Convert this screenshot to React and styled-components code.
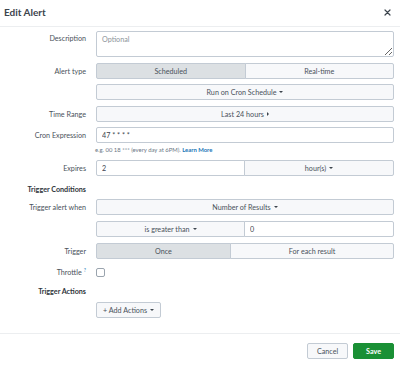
import React from "react"
import styled, { createGlobalStyle } from 'styled-components'

const GlobalStyle = createGlobalStyle`
  html, body {
    margin: 0;
    padding: 0;
    background: #fff;
  }
  body {
    font-family: Lato, "Open Sans", "Liberation Sans", sans-serif;
    color: #3c444d;
  }
`

const Modal = styled.div`
  width: 400px;
  height: 367px;
  display: flex;
  flex-direction: column;
  background: #fff;
`

const Header = styled.div`
  height: 26px;
  display: flex;
  align-items: center;
  justify-content: space-between;
  padding: 0 9px 0 4px;
  border-bottom: 1px solid #eceef0;
  flex-shrink: 0;
`

const Title = styled.h2`
  margin: 0;
  font-size: 10px;
  font-weight: 700;
  color: #3c444d;
  padding-bottom: 2px;
`

const Close = styled.button`
  border: 0;
  background: none;
  padding: 0;
  width: 8px;
  height: 8px;
  display: flex;
  align-items: center;
  justify-content: center;
  cursor: pointer;
  margin-bottom: 2px;
`

const Body = styled.div`
  flex: 1;
  padding: 4px 6px 0 0;
`

const Row = styled.div`
  display: flex;
  align-items: center;
  min-height: 9px;
  margin-bottom: ${p => p.$mb ?? 6}px;
`

const Label = styled.label`
  width: 86px;
  padding-right: 10px;
  flex-shrink: 0;
  text-align: right;
  font-size: 7.2px;
  line-height: 9px;
  color: ${p => (p.$heading ? '#2f353b' : '#4a525b')};
  font-weight: ${p => (p.$heading ? 700 : 400)};
`

const Control = styled.div`
  flex: 1;
  display: flex;
  min-width: 0;
`

const TextArea = styled.textarea`
  width: 100%;
  height: 26px;
  box-sizing: border-box;
  border: 1px solid #c3cbd4;
  border-radius: 2px;
  padding: 3px 5px;
  font-family: inherit;
  font-size: 7.2px;
  color: #3c444d;
  resize: vertical;
  &::placeholder {
    color: #8c939a;
  }
`

const Input = styled.input`
  flex: 1;
  min-width: 0;
  height: 16px;
  box-sizing: border-box;
  border: 1px solid #c3cbd4;
  border-radius: ${p => p.$radius || '2px'};
  padding: 0 5px;
  font-family: inherit;
  font-size: 7.2px;
  color: #3c444d;
  background: #fff;
`

const Segment = styled.button`
  flex: ${p => p.$flex || 1};
  height: 16px;
  box-sizing: border-box;
  border: 1px solid #c3cbd4;
  margin-left: -1px;
  background: ${p => (p.$active ? '#dce0e3' : '#f7f8fa')};
  font-family: inherit;
  font-size: 7.2px;
  color: #4a525b;
  padding: 0;
  display: flex;
  align-items: center;
  justify-content: center;
  &:first-child {
    margin-left: 0;
    border-radius: 2px 0 0 2px;
  }
  &:last-child {
    border-radius: 0 2px 2px 0;
  }
  &:only-child {
    border-radius: 2px;
  }
`

const Caret = styled.span`
  display: inline-block;
  margin-left: 3px;
  width: 0;
  height: 0;
  border-left: 2.2px solid transparent;
  border-right: 2.2px solid transparent;
  border-top: 2.6px solid #3c444d;
`

const RightCaret = styled.span`
  display: inline-block;
  margin-left: 3px;
  width: 0;
  height: 0;
  border-top: 2.2px solid transparent;
  border-bottom: 2.2px solid transparent;
  border-left: 2.6px solid #3c444d;
`

const Help = styled.div`
  margin: -3px 0 7px 95px;
  font-size: 5.9px;
  color: #6b7785;
  a {
    color: #1a76b7;
    font-weight: 700;
    text-decoration: none;
  }
`

const Checkbox = styled.span`
  width: 9px;
  height: 9px;
  box-sizing: border-box;
  border: 1px solid #9aa4ae;
  border-radius: 2px;
  background: #fff;
`

const Sup = styled.sup`
  color: #1a76b7;
  font-size: 5px;
  line-height: 0;
  margin-left: 2px;
`

const SmallButton = styled.button`
  height: 16px;
  width: 65px;
  box-sizing: border-box;
  border: 1px solid #c3cbd4;
  border-radius: 2px;
  background: #f7f8fa;
  font-family: inherit;
  font-size: 7.2px;
  color: #4a525b;
  padding: 0;
  display: flex;
  align-items: center;
  justify-content: center;
`

const Footer = styled.div`
  height: 34px;
  border-top: 1px solid #eceef0;
  display: flex;
  justify-content: flex-end;
  align-items: flex-start;
  gap: 5px;
  padding: 9px 6px 0 0;
  box-sizing: border-box;
  flex-shrink: 0;
`

const FooterButton = styled.button`
  width: 41px;
  height: 16px;
  box-sizing: border-box;
  border-radius: 2px;
  font-family: inherit;
  font-size: 7.2px;
  padding: 0;
  border: 1px solid ${p => (p.$primary ? '#1a9035' : '#c3cbd4')};
  background: ${p => (p.$primary ? '#1a9035' : '#f7f8fa')};
  color: ${p => (p.$primary ? '#fff' : '#4a525b')};
  font-weight: ${p => (p.$primary ? 700 : 400)};
`

export default function App() {
  return (
    <Modal>
      <GlobalStyle />
      <Header>
        <Title>Edit Alert</Title>
        <Close aria-label="Close">
          <svg width="7" height="7" viewBox="0 0 7 7">
            <path d="M1 1L6 6M6 1L1 6" stroke="#3c444d" strokeWidth="1.2" strokeLinecap="round" />
          </svg>
        </Close>
      </Header>
      <Body>
        <Row $mb={6}>
          <Label style={{ alignSelf: 'flex-start', paddingTop: 3 }}>Description</Label>
          <Control>
            <TextArea placeholder="Optional" />
          </Control>
        </Row>
        <Row $mb={5}>
          <Label>Alert type</Label>
          <Control>
            <Segment $active>Scheduled</Segment>
            <Segment>Real-time</Segment>
          </Control>
        </Row>
        <Row $mb={6}>
          <Label />
          <Control>
            <Segment>Run on Cron Schedule<Caret /></Segment>
          </Control>
        </Row>
        <Row $mb={5}>
          <Label>Time Range</Label>
          <Control>
            <Segment>Last 24 hours<RightCaret /></Segment>
          </Control>
        </Row>
        <Row $mb={6}>
          <Label>Cron Expression</Label>
          <Control>
            <Input defaultValue="47 * * * *" />
          </Control>
        </Row>
        <Help>
          e.g. 00 18 *** (every day at 6PM). <a href="#">Learn More</a>
        </Help>
        <Row $mb={9}>
          <Label>Expires</Label>
          <Control>
            <Input defaultValue="2" $radius="2px 0 0 2px" style={{ flex: '0 0 149px' }} />
            <Segment style={{ borderRadius: '0 2px 2px 0' }}>hour(s)<Caret /></Segment>
          </Control>
        </Row>
        <Row $mb={5}>
          <Label $heading>Trigger Conditions</Label>
        </Row>
        <Row $mb={6}>
          <Label>Trigger alert when</Label>
          <Control>
            <Segment>Number of Results<Caret /></Segment>
          </Control>
        </Row>
        <Row $mb={6}>
          <Label />
          <Control>
            <Segment style={{ flex: '0 0 149px', borderRadius: '2px 0 0 2px' }}>is greater than<Caret /></Segment>
            <Input defaultValue="0" $radius="0 2px 2px 0" style={{ marginLeft: -1 }} />
          </Control>
        </Row>
        <Row $mb={9}>
          <Label>Trigger</Label>
          <Control>
            <Segment $active style={{ flex: '0 0 135px' }}>Once</Segment>
            <Segment>For each result</Segment>
          </Control>
        </Row>
        <Row $mb={10}>
          <Label>Throttle<Sup>?</Sup></Label>
          <Control>
            <Checkbox />
          </Control>
        </Row>
        <Row $mb={6}>
          <Label $heading>Trigger Actions</Label>
        </Row>
        <Row $mb={0}>
          <Label />
          <Control>
            <SmallButton>+ Add Actions<Caret /></SmallButton>
          </Control>
        </Row>
      </Body>
      <Footer>
        <FooterButton>Cancel</FooterButton>
        <FooterButton $primary>Save</FooterButton>
      </Footer>
    </Modal>
  )
}
